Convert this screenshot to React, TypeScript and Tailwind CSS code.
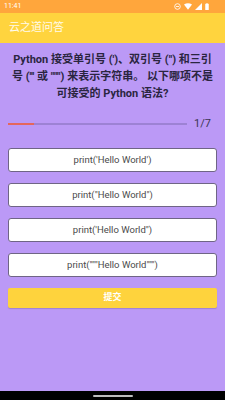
import React from "react";

const font = { fontFamily: 'Roboto, "Noto Sans CJK SC", sans-serif' };

export default function App() {
  const options = [
    "print('Hello World')",
    'print("Hello World")',
    "print('Hello World\")",
    'print("""Hello World""")',
  ];
  return (
    <div className="w-[225px] h-[400px] flex flex-col bg-[#bb99f6] overflow-hidden" style={font}>
      {/* status bar */}
      <div className="h-[13px] bg-[#ffa63c] flex items-center justify-between pl-[4px] pr-[16px]">
        <span className="text-[7px] text-white leading-none">11:41</span>
        <div className="flex items-center gap-[3px]">
          <svg width="7" height="7" viewBox="0 0 10 10">
            <circle cx="5" cy="5" r="4" fill="none" stroke="white" strokeWidth="1.2" />
            <rect x="2.8" y="4.4" width="4.4" height="1.2" fill="white" />
          </svg>
          <svg width="8" height="7" viewBox="0 0 12 10">
            <path d="M0 2 Q6 -2 12 2 L6 10 Z" fill="white" />
          </svg>
          <svg width="7" height="7" viewBox="0 0 10 10">
            <path d="M10 0 L10 10 L0 10 Z" fill="white" />
          </svg>
          <svg width="4" height="7" viewBox="0 0 5 10">
            <rect x="0" y="1" width="5" height="9" rx="0.5" fill="white" />
            <rect x="1.5" y="0" width="2" height="1" fill="white" />
          </svg>
        </div>
      </div>
      {/* app bar */}
      <div className="h-[30px] bg-[#ffd43e] flex items-center pl-[9px]">
        <span className="text-[11px] text-white/90">云之道问答</span>
      </div>
      {/* question */}
      <div className="pt-[8px] px-[11px] text-center text-[11px] leading-[17px] font-bold text-[#2a2540]">
        Python 接受单引号 (')、双引号 (") 和三引号 (''' 或 """) 来表示字符串。 以下哪项不是可接受的 Python 语法?
      </div>
      {/* progress */}
      <div className="mt-[16px] flex items-center pl-[8px] pr-[14px] gap-[7px]">
        <div className="flex-1 h-[2px] bg-[#9d82d4] flex">
          <div className="w-[26px] h-full bg-[#e5665c]" />
        </div>
        <span className="text-[11px] text-[#3a3550] leading-none">1/7</span>
      </div>
      {/* options */}
      <div className="mt-[19px] px-[8px] flex flex-col gap-[11px]">
        {options.map((o, i) => (
          <div
            key={i}
            className="h-[24px] bg-white border border-[#6f6585] rounded-[3px] flex items-center justify-center text-[9.5px] text-[#4a4a4a]"
          >
            {o}
          </div>
        ))}
        <div className="h-[20px] bg-[#fed33d] rounded-[2px] flex items-center justify-center text-[9px] font-bold text-white shadow-[0_1px_1px_rgba(0,0,0,0.15)]">
          提交
        </div>
      </div>
      <div className="flex-1" />
      {/* nav bar */}
      <div className="h-[9px] bg-black flex items-center justify-center">
        <div className="w-[40px] h-[2px] rounded-full bg-[#bdbdbd]" />
      </div>
    </div>
  );
}
